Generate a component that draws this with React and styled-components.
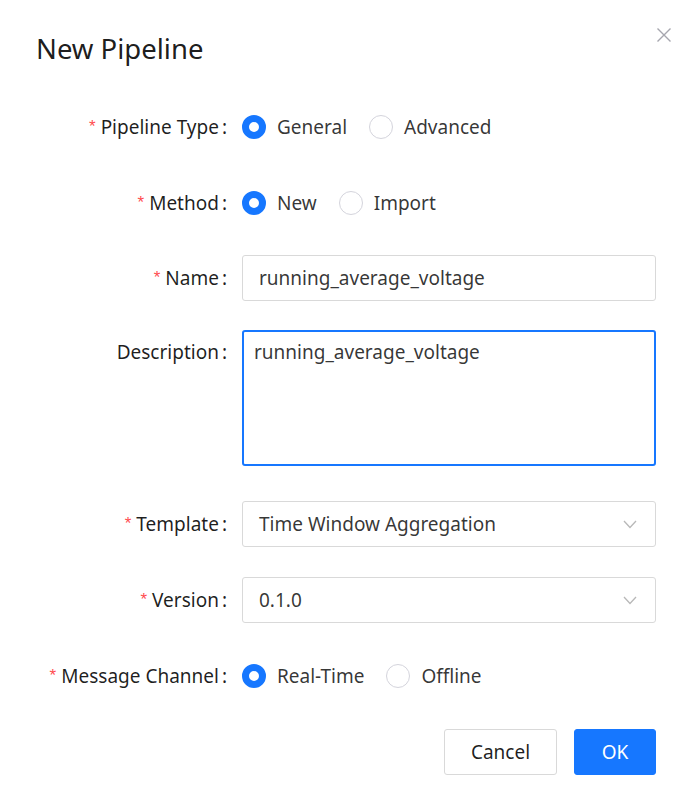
import styled, {createGlobalStyle} from "styled-components";

const GlobalStyle = createGlobalStyle`
  html, body {
    margin: 0;
    background: #fff;
  }
  body {
    font-family: "Noto Sans", "Liberation Sans", sans-serif;
    color: rgba(0, 0, 0, 0.88);
  }
  * {
    box-sizing: border-box;
  }
`

const Modal = styled.div`
  position: relative;
  width: 689px;
  height: 794px;
  padding: 29px 33px 0 36px;
`

const Title = styled.h2`
  margin: 0;
  font-size: 27.5px;
  font-weight: 400;
  line-height: 40px;
  color: rgba(0, 0, 0, 0.9);
`

const CloseButton = styled.button`
  position: absolute;
  top: 26px;
  right: 16px;
  width: 18px;
  height: 18px;
  padding: 0;
  border: none;
  background: none;
  display: flex;
  align-items: center;
  justify-content: center;
  cursor: pointer;
`

const Form = styled.form`
  margin-top: 35px;
  display: grid;
  grid-template-columns: 197px 1fr;
  column-gap: 9px;
`

const Label = styled.label`
  display: flex;
  align-items: ${p => (p.$top ? "flex-start" : "center")};
  justify-content: flex-end;
  height: 46px;
  padding-top: ${p => (p.$top ? "9px" : "0")};
  font-size: 19px;
  white-space: nowrap;
  color: rgba(0, 0, 0, 0.88);
`

const Star = styled.span`
  color: #ff4d4f;
  font-size: 17px;
  margin-right: 5px;
  font-family: "Liberation Sans", sans-serif;
`

const Colon = styled.span`
  margin: 0 6px 0 3px;
`

const Field = styled.div`
  min-height: 46px;
  margin-bottom: ${p => p.$gap || 30}px;
  display: flex;
  align-items: center;
`

const RadioGroup = styled.div`
  display: flex;
  align-items: center;
  gap: 22px;
`

const RadioOption = styled.span`
  display: flex;
  align-items: center;
  gap: 11px;
  font-size: 19px;
  color: rgba(0, 0, 0, 0.8);
`

const RadioDot = styled.span`
  width: 24px;
  height: 24px;
  border-radius: 50%;
  background: #fff;
  border: ${p => (p.$checked ? "7px solid #1677ff" : "1px solid #d4d4dc")};
`

const Input = styled.div`
  width: 100%;
  height: 46px;
  border: 1px solid #d9d9d9;
  border-radius: 3px;
  padding: 0 16px;
  display: flex;
  align-items: center;
  font-size: 19px;
  color: rgba(0, 0, 0, 0.8);
`

const TextArea = styled.div`
  width: 100%;
  height: 136px;
  border: 2px solid #1677ff;
  border-radius: 3px;
  padding: 6px 10px;
  font-size: 19px;
  line-height: 28px;
  color: rgba(0, 0, 0, 0.8);
`

const Select = styled(Input)`
  justify-content: space-between;
  padding: 0 18px 0 16px;
`

const Footer = styled.div`
  display: flex;
  justify-content: flex-end;
  gap: 17px;
`

const Button = styled.button`
  height: 46px;
  min-width: ${p => (p.$primary ? "82px" : "113px")};
  padding: 0 20px;
  border-radius: 3px;
  font-family: inherit;
  font-size: 19px;
  border: 1px solid ${p => (p.$primary ? "#1677ff" : "#d9d9d9")};
  background: ${p => (p.$primary ? "#1677ff" : "#fff")};
  color: ${p => (p.$primary ? "#fff" : "rgba(0, 0, 0, 0.88)")};
  cursor: pointer;
`

const Chevron = () => (
  <svg width="14" height="9" viewBox="0 0 14 9" fill="none">
    <path d="M1 1l6 6.5L13 1" stroke="#b8b8b8" strokeWidth="1.3"/>
  </svg>
)

const Radio = ({checked, children}) => (
  <RadioOption>
    <RadioDot $checked={checked}/>
    {children}
  </RadioOption>
)

const FieldLabel = ({required, top, children}) => (
  <Label $top={top}>
    {required && <Star>*</Star>}
    {children}
    <Colon>:</Colon>
  </Label>
)

export default function App() {
  return (
    <>
      <GlobalStyle/>
      <Modal>
        <Title>New Pipeline</Title>
        <CloseButton aria-label="Close">
          <svg width="16" height="16" viewBox="0 0 16 16">
            <path d="M1.5 1.5l13 13M14.5 1.5l-13 13" stroke="#a6a6ae" strokeWidth="1.4"/>
          </svg>
        </CloseButton>
        <Form>
          <FieldLabel required>Pipeline Type</FieldLabel>
          <Field>
            <RadioGroup>
              <Radio checked>General</Radio>
              <Radio>Advanced</Radio>
            </RadioGroup>
          </Field>

          <FieldLabel required>Method</FieldLabel>
          <Field $gap={29}>
            <RadioGroup>
              <Radio checked>New</Radio>
              <Radio>Import</Radio>
            </RadioGroup>
          </Field>

          <FieldLabel required>Name</FieldLabel>
          <Field $gap={29}>
            <Input>running_average_voltage</Input>
          </Field>

          <FieldLabel top>Description</FieldLabel>
          <Field $gap={35}>
            <TextArea>running_average_voltage</TextArea>
          </Field>

          <FieldLabel required>Template</FieldLabel>
          <Field>
            <Select>
              Time Window Aggregation
              <Chevron/>
            </Select>
          </Field>

          <FieldLabel required>Version</FieldLabel>
          <Field>
            <Select>
              0.1.0
              <Chevron/>
            </Select>
          </Field>

          <FieldLabel required>Message Channel</FieldLabel>
          <Field>
            <RadioGroup>
              <Radio checked>Real-Time</Radio>
              <Radio>Offline</Radio>
            </RadioGroup>
          </Field>
        </Form>
        <Footer>
          <Button type="button">Cancel</Button>
          <Button type="button" $primary>OK</Button>
        </Footer>
      </Modal>
    </>
  )
}
